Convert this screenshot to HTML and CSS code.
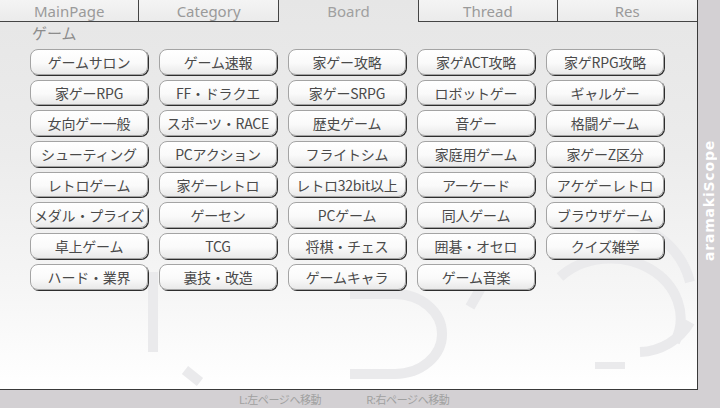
FILE: index.html
```html
<!DOCTYPE html>
<html lang="ja">
<head>
<meta charset="utf-8">
<link rel="stylesheet" href="styles.css">
</head>
<body>
<div class="screen">
  <div class="main">
    <div class="panel">
      <svg class="deco" width="697" height="368" viewBox="0 0 697 368">
        <g fill="none" stroke="#eaeaec" stroke-width="10">
          <path d="M153 250 V330"/>
          <path d="M350 272 H395 A40 34 0 0 1 395 352 H350"/>
          <path d="M470 285 L490 250"/>
          <path d="M560 255 A70 60 0 0 1 675 320"/>
          <path d="M610 200 A80 80 0 0 1 690 260"/>
          <path d="M640 330 A60 60 0 0 0 690 300"/>
          <path d="M185 348 L200 360"/>
        </g>
        <rect x="595" y="340" width="30" height="7" fill="#eaeaec"/>
      </svg>
      <div class="tabs">
        <div class="tab sep-r">MainPage</div>
        <div class="tab sep-r">Category</div>
        <div class="tab active">Board</div>
        <div class="tab sep-l sep-r">Thread</div>
        <div class="tab">Res</div>
      </div>
      <div class="content">
        <div class="heading">ゲーム</div>
        <div class="grid">
          <button class="btn">ゲームサロン</button>
          <button class="btn">ゲーム速報</button>
          <button class="btn">家ゲー攻略</button>
          <button class="btn">家ゲACT攻略</button>
          <button class="btn">家ゲRPG攻略</button>
          <button class="btn">家ゲーRPG</button>
          <button class="btn">FF・ドラクエ</button>
          <button class="btn">家ゲーSRPG</button>
          <button class="btn">ロボットゲー</button>
          <button class="btn">ギャルゲー</button>
          <button class="btn">女向ゲー一般</button>
          <button class="btn">スポーツ・RACE</button>
          <button class="btn">歴史ゲーム</button>
          <button class="btn">音ゲー</button>
          <button class="btn">格闘ゲーム</button>
          <button class="btn">シューティング</button>
          <button class="btn">PCアクション</button>
          <button class="btn">フライトシム</button>
          <button class="btn">家庭用ゲーム</button>
          <button class="btn">家ゲーZ区分</button>
          <button class="btn">レトロゲーム</button>
          <button class="btn">家ゲーレトロ</button>
          <button class="btn">レトロ32bit以上</button>
          <button class="btn">アーケード</button>
          <button class="btn">アケゲーレトロ</button>
          <button class="btn">メダル・プライズ</button>
          <button class="btn">ゲーセン</button>
          <button class="btn">PCゲーム</button>
          <button class="btn">同人ゲーム</button>
          <button class="btn">ブラウザゲーム</button>
          <button class="btn">卓上ゲーム</button>
          <button class="btn">TCG</button>
          <button class="btn">将棋・チェス</button>
          <button class="btn">囲碁・オセロ</button>
          <button class="btn">クイズ雑学</button>
          <button class="btn">ハード・業界</button>
          <button class="btn">裏技・改造</button>
          <button class="btn">ゲームキャラ</button>
          <button class="btn">ゲーム音楽</button>
        </div>
      </div>
    </div>
    <div class="footer">
      <span class="hint">L:左ページへ移動</span>
      <span class="hint">R:右ページへ移動</span>
    </div>
  </div>
  <div class="side"><span class="brand">aramakiScope</span></div>
</div>
</body>
</html>
```

FILE: styles.css
```css
html, body {
  margin: 0;
  padding: 0;
  width: 720px;
  height: 408px;
  overflow: hidden;
  font-family: "Noto Sans", "Noto Sans CJK JP", sans-serif;
}

.screen {
  display: flex;
  width: 720px;
  height: 408px;
  background: #d3d0d3;
}

.main {
  width: 698px;
  display: flex;
  flex-direction: column;
}

.panel {
  position: relative;
  box-sizing: border-box;
  height: 390px;
  border-right: 1px solid #3a3a3a;
  border-bottom: 1px solid #3a3a3a;
  background: linear-gradient(to bottom, #e6e6e6 0%, #ececec 40%, #f6f6f6 75%, #ffffff 100%);
}

.deco {
  position: absolute;
  left: 0;
  top: 22px;
}

.tabs {
  position: relative;
  display: flex;
  height: 22px;
}

.tab {
  box-sizing: border-box;
  width: 139.4px;
  height: 22px;
  border-bottom: 1px solid #444;
  background: linear-gradient(to bottom, #f4f4f4, #ebebeb);
  color: #9a9a9a;
  font-size: 15px;
  text-align: center;
  padding-top: 1px;
  line-height: 20px;
}

.tab.sep-r { border-right: 1px solid #444; }
.tab.sep-l { border-left: 1px solid #444; }

.tab.active {
  border-bottom: none;
  background: transparent;
  color: #a0a0a0;
}

.content {
  position: relative;
  padding: 1px 0 0 30px;
}

.heading {
  font-size: 15px;
  color: #8c8c8c;
  line-height: 20px;
  margin-left: 2px;
}

.grid {
  display: grid;
  grid-template-columns: repeat(5, 118px);
  grid-auto-rows: 25.7px;
  column-gap: 11px;
  row-gap: 5px;
  margin-top: 6px;
}

.btn {
  box-sizing: border-box;
  margin: 0;
  padding: 0;
  border: 1px solid #a4a4a4;
  border-radius: 8px;
  background: linear-gradient(to bottom, #ffffff 0%, #fafafa 55%, #e9e9e9 100%);
  box-shadow: 1px 1px 0 #2e2e2e;
  font-family: "Noto Sans CJK JP", "Noto Sans", sans-serif;
  font-size: 14px;
  color: #4a4a4a;
  white-space: nowrap;
  line-height: 22px;
  letter-spacing: -0.2px;
}

.footer {
  flex: 1;
  display: flex;
  gap: 45px;
  padding-left: 239px;
  align-items: center;
}

.hint {
  font-size: 11px;
  color: #a0a0a0;
  font-family: "Noto Sans CJK JP", sans-serif;
  line-height: 18px;
  letter-spacing: -0.4px;
}

.side {
  width: 22px;
  display: flex;
  justify-content: center;
  align-items: flex-start;
  padding-top: 140px;
  box-sizing: border-box;
  height: 390px;
}

.brand {
  writing-mode: vertical-rl;
  transform: rotate(180deg);
  color: #ffffff;
  font-family: "DejaVu Sans", sans-serif;
  font-weight: bold;
  font-size: 14px;
  letter-spacing: 0.8px;
}
```
